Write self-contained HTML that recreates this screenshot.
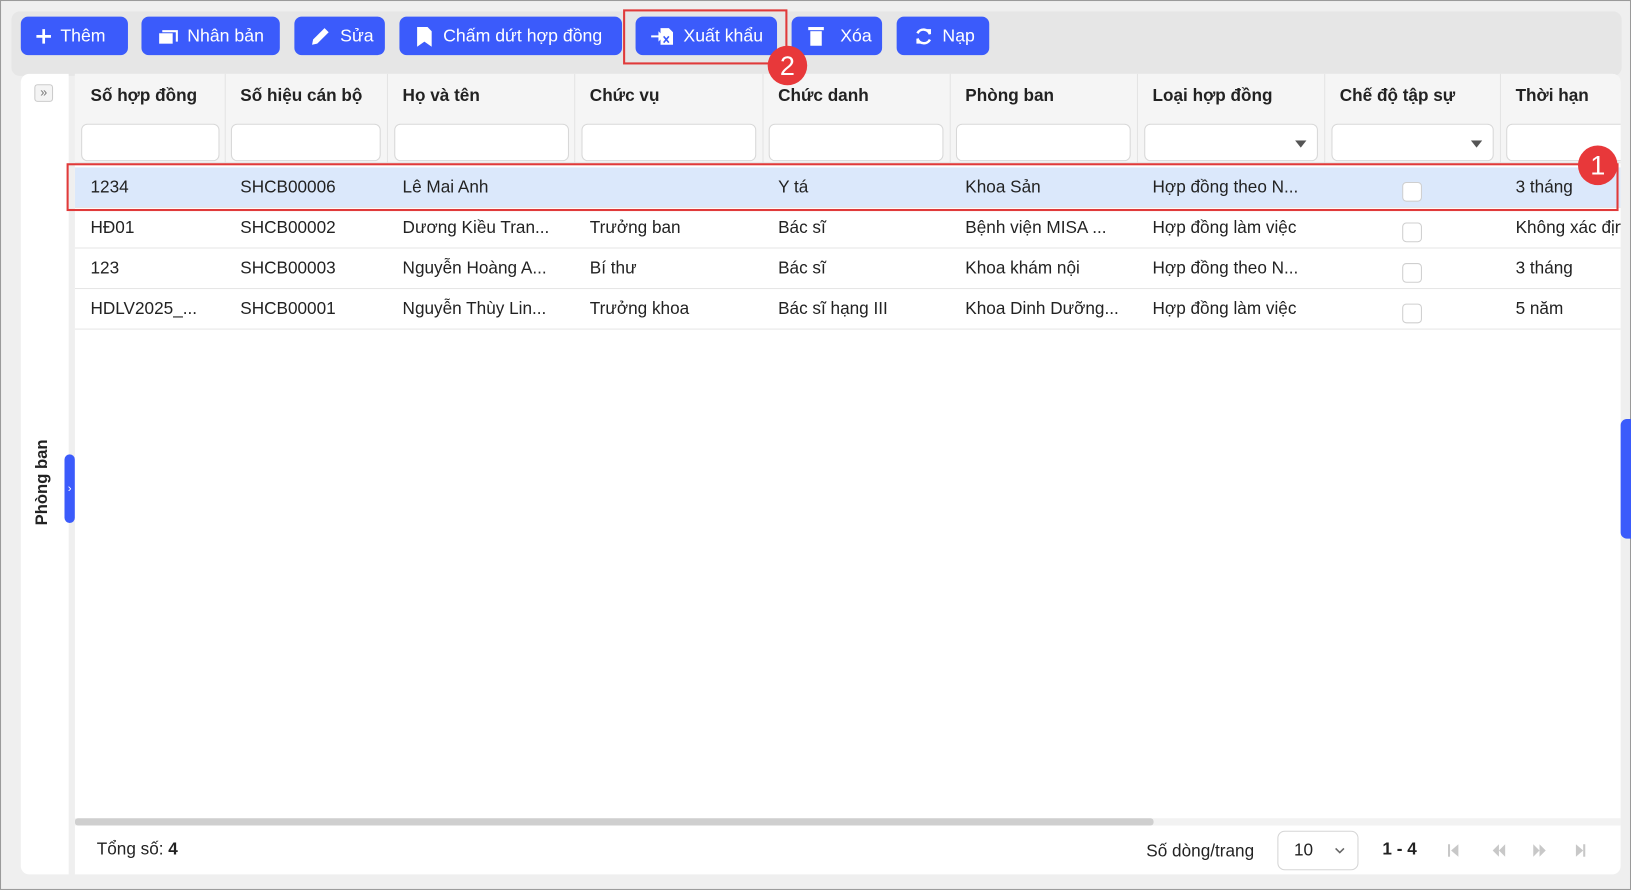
<!DOCTYPE html>
<html><head><meta charset="utf-8"><style>
*{box-sizing:border-box;margin:0;padding:0}
html,body{width:1631px;height:890px;overflow:hidden;background:#efefef}
#w{position:absolute;left:0;top:0;width:1568px;height:856px;transform:scale(1.0402,1.0397);transform-origin:0 0;font-family:"Liberation Sans",sans-serif;color:#222;font-size:16.5px;border:1px solid #9a9a9a;background:#efefef}
.a{position:absolute}
.tb{left:10px;top:10px;width:1548px;height:62px;background:#e6e6e6;border-radius:8px}
.btn{position:absolute;top:15px;height:37px;background:#3b5bfb;color:#fff;border-radius:7px;font-size:17px;display:flex;align-items:center;padding-left:14px;gap:8px}
.btn svg{flex:none}
.side{left:19px;top:70px;width:46px;height:770px;background:#fff;border-radius:8px 0 0 8px}
.grid{left:71px;top:70px;width:1486px;height:770px;background:#fff;border-radius:0 8px 8px 0;overflow:hidden}
.hdr{position:absolute;left:0;top:0;width:1486px;height:86px;background:#f5f5f5;border-bottom:1px solid #e6e6e6}
.hc{position:absolute;top:12px;font-weight:bold;font-size:16.5px}
.vl{position:absolute;top:0;width:1px;height:86px;background:#e4e4e4}
.fi{position:absolute;top:48px;height:36px;background:#fff;border:1px solid #d8d8d8;border-radius:6px}
.row{position:absolute;left:0;width:1486px;height:39px;border-bottom:1px solid #e6e6e6}
.c{position:absolute;top:10px;white-space:nowrap}
.cb{position:absolute;left:1276px;top:14px;width:19px;height:19px;border:1px solid #cfcfcf;border-radius:4px;background:#fff}
.red{position:absolute;border:2px solid #e03a3a}
.num{position:absolute;width:38px;height:38px;border-radius:50%;background:#e8383a;color:#fff;font-size:26px;display:flex;align-items:center;justify-content:center}
</style></head><body><div id="w">
<div class="a tb"></div>
<div class="btn" style="left:19px;width:103px"><svg width="16" height="16"><path d="M8 1v14M1 8h14" stroke="#fff" stroke-width="2.6"/></svg>Thêm</div>
<div class="btn" style="left:135px;width:133px;padding-left:16px"><svg width="20" height="16"><rect x="1" y="5" width="13" height="10" fill="#fff"/><path d="M4 3h14v10" stroke="#fff" stroke-width="2" fill="none"/></svg>Nhân bản</div>
<div class="btn" style="left:282px;width:87px"><svg width="22" height="22"><path d="M3 19l1-5L15 3l4 4L8 18z" fill="#fff"/></svg>Sửa</div>
<div class="btn" style="left:383px;width:214px"><svg width="20" height="22"><path d="M3 2h10l4 4v15l-7-5-7 5z" fill="#fff"/></svg>Chấm dứt hợp đồng</div>
<div class="btn" style="left:610px;width:136px"><svg width="24" height="20"><path d="M1 9h7V5l5 5-5 5v-4H1z" fill="#fff"/><path d="M10 2h8l4 4v12H10z" fill="#fff"/><path d="M13 10l5 6M18 10l-5 6" stroke="#3b5bfb" stroke-width="1.6"/></svg>Xuất khẩu</div>
<div class="btn" style="left:760px;width:87px"><svg width="20" height="20"><rect x="2" y="1" width="15" height="3" fill="#fff"/><rect x="4" y="5" width="11" height="14" fill="#fff"/></svg>&nbsp;Xóa</div>
<div class="btn" style="left:861px;width:89px;padding-left:16px"><svg width="20" height="20"><path d="M16 8a6.5 6.5 0 0 0-12-1M4 12a6.5 6.5 0 0 0 12 1" stroke="#fff" stroke-width="2.4" fill="none"/><path d="M13 3l4 0 0 5zM7 17l-4 0 0-5z" fill="#fff"/></svg>Nạp</div>

<div class="a side"></div>
<div class="a" style="left:32px;top:80px;width:18px;height:17px;border:1px solid #ccc;border-radius:3px;background:#f4f4f4;font-size:12px;line-height:14px;text-align:center;color:#777">»</div>
<div class="a" style="left:-8px;top:454px;width:96px;transform:rotate(-90deg);font-weight:bold;font-size:16px;text-align:center">Phòng ban</div>
<div class="a" style="left:61px;top:436px;width:10px;height:66px;background:#3b5bfb;border-radius:5px;color:#fff;font-size:11px;line-height:66px;text-align:center">›</div>

<div class="a grid">
<div class="hdr">
<div class="hc" style="left:15px">Số hợp đồng</div>
<div class="hc" style="left:159px">Số hiệu cán bộ</div>
<div class="hc" style="left:315px">Họ và tên</div>
<div class="hc" style="left:495px">Chức vụ</div>
<div class="hc" style="left:676px">Chức danh</div>
<div class="hc" style="left:856px">Phòng ban</div>
<div class="hc" style="left:1036px">Loại hợp đồng</div>
<div class="hc" style="left:1216px">Chế độ tập sự</div>
<div class="hc" style="left:1385px">Thời hạn</div>
<div class="vl" style="left:144px"></div><div class="vl" style="left:300px"></div><div class="vl" style="left:480px"></div><div class="vl" style="left:661px"></div><div class="vl" style="left:841px"></div><div class="vl" style="left:1021px"></div><div class="vl" style="left:1201px"></div><div class="vl" style="left:1370px"></div>
<div class="fi" style="left:6px;width:133px"></div>
<div class="fi" style="left:150px;width:144px"></div>
<div class="fi" style="left:307px;width:168px"></div>
<div class="fi" style="left:487px;width:168px"></div>
<div class="fi" style="left:667px;width:168px"></div>
<div class="fi" style="left:847px;width:168px"></div>
<div class="fi" style="left:1028px;width:167px"><svg style="position:absolute;right:10px;top:15px" width="11" height="7"><path d="M0 0h11L5.5 7z" fill="#555"/></svg></div>
<div class="fi" style="left:1208px;width:156px"><svg style="position:absolute;right:10px;top:15px" width="11" height="7"><path d="M0 0h11L5.5 7z" fill="#555"/></svg></div>
<div class="fi" style="left:1376px;width:140px"></div>
</div>
<div class="row" style="top:90px;background:#dbe8fb"><span class="c" style="left:15px">1234</span><span class="c" style="left:159px">SHCB00006</span><span class="c" style="left:315px">Lê Mai Anh</span><span class="c" style="left:676px">Y tá</span><span class="c" style="left:856px">Khoa Sản</span><span class="c" style="left:1036px">Hợp đồng theo N...</span><div class="cb"></div><span class="c" style="left:1385px">3 tháng</span></div>
<div class="row" style="top:129px"><span class="c" style="left:15px">HĐ01</span><span class="c" style="left:159px">SHCB00002</span><span class="c" style="left:315px">Dương Kiều Tran...</span><span class="c" style="left:495px">Trưởng ban</span><span class="c" style="left:676px">Bác sĩ</span><span class="c" style="left:856px">Bệnh viện MISA ...</span><span class="c" style="left:1036px">Hợp đồng làm việc</span><div class="cb"></div><span class="c" style="left:1385px">Không xác định</span></div>
<div class="row" style="top:168px"><span class="c" style="left:15px">123</span><span class="c" style="left:159px">SHCB00003</span><span class="c" style="left:315px">Nguyễn Hoàng A...</span><span class="c" style="left:495px">Bí thư</span><span class="c" style="left:676px">Bác sĩ</span><span class="c" style="left:856px">Khoa khám nội</span><span class="c" style="left:1036px">Hợp đồng theo N...</span><div class="cb"></div><span class="c" style="left:1385px">3 tháng</span></div>
<div class="row" style="top:207px"><span class="c" style="left:15px">HDLV2025_...</span><span class="c" style="left:159px">SHCB00001</span><span class="c" style="left:315px">Nguyễn Thùy Lin...</span><span class="c" style="left:495px">Trưởng khoa</span><span class="c" style="left:676px">Bác sĩ hạng III</span><span class="c" style="left:856px">Khoa Dinh Dưỡng...</span><span class="c" style="left:1036px">Hợp đồng làm việc</span><div class="cb"></div><span class="c" style="left:1385px">5 năm</span></div>
<div class="a" style="left:0;top:716px;width:1486px;height:7px;background:#f2f2f2"></div>
<div class="a" style="left:0;top:716px;width:1037px;height:7px;background:#cfcfcf;border-radius:3px"></div>
<div class="a" style="left:21px;top:737px">Tổng số: <b>4</b></div>
<div class="a" style="left:1030px;top:739px">Số dòng/trang</div>
<div class="a" style="left:1156px;top:728px;width:78px;height:38px;border:1px solid #d5d5d5;border-radius:7px;padding:9px 0 0 15px">10<svg style="position:absolute;right:12px;top:15px" width="10" height="7"><path d="M1 1l4 4 4-4" stroke="#666" stroke-width="1.5" fill="none"/></svg></div>
<div class="a" style="left:1257px;top:737px;font-weight:bold">1 - 4</div>
<svg class="a" style="left:1320px;top:740px" width="150" height="14">
<g fill="#c8c8c8"><rect x="0" y="1" width="2" height="12"/><path d="M10 1L3 7l7 6z"/>
<path d="M49 1l-6 6 6 6zM55 1l-6 6 6 6z"/>
<path d="M82 1l6 6-6 6zM88 1l6 6-6 6z"/>
<path d="M123 1l7 6-7 6z"/><rect x="130" y="1" width="2" height="12"/></g></svg>
</div>
<div class="red" style="left:598px;top:8px;width:158px;height:53px"></div>
<div class="num" style="left:737px;top:43px">2</div>
<div class="red" style="left:63px;top:156px;width:1492px;height:46px"></div>
<div class="num" style="left:1516px;top:139px">1</div>
<div class="a" style="left:1557px;top:402px;width:12px;height:115px;background:#3b5bfb;border-radius:6px 0 0 6px"></div>
</div></body></html>
